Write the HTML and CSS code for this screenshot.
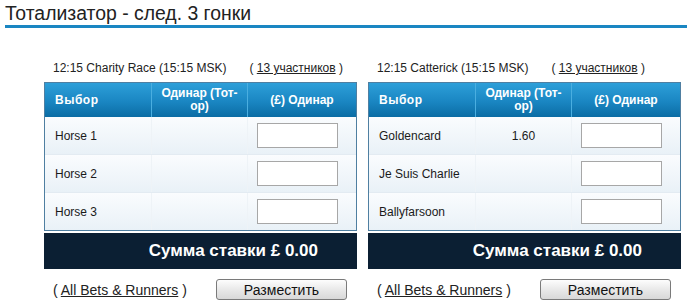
FILE: index.html
```html
<!DOCTYPE html>
<html>
<head>
<meta charset="utf-8">
<link rel="stylesheet" href="styles.css">
</head>
<body>
<div class="page">
  <h1 class="title">Тотализатор - след. 3 гонки</h1>
  <div class="races">
    <div class="race">
      <div class="race-head">12:15 Charity Race (15:15 MSK)<span class="runners">( <a href="#">13 участников</a> )</span></div>
      <div class="panel">
        <div class="row head">
          <div class="c1">Выбор</div>
          <div class="c2">Одинар (Тот-ор)</div>
          <div class="c3">(£) Одинар</div>
        </div>
        <div class="row">
          <div class="c1">Horse 1</div>
          <div class="c2"></div>
          <div class="c3"><input class="stake" type="text"></div>
        </div>
        <div class="row">
          <div class="c1">Horse 2</div>
          <div class="c2"></div>
          <div class="c3"><input class="stake" type="text"></div>
        </div>
        <div class="row last">
          <div class="c1">Horse 3</div>
          <div class="c2"></div>
          <div class="c3"><input class="stake" type="text"></div>
        </div>
      </div>
      <div class="total">Сумма ставки £ 0.00</div>
      <div class="actions">
        <span class="all">( <a href="#">All Bets &amp; Runners</a> )</span>
        <button class="place">Разместить</button>
      </div>
    </div>
    <div class="race">
      <div class="race-head">12:15 Catterick (15:15 MSK)<span class="runners">( <a href="#">13 участников</a> )</span></div>
      <div class="panel">
        <div class="row head">
          <div class="c1">Выбор</div>
          <div class="c2">Одинар (Тот-ор)</div>
          <div class="c3">(£) Одинар</div>
        </div>
        <div class="row">
          <div class="c1">Goldencard</div>
          <div class="c2">1.60</div>
          <div class="c3"><input class="stake" type="text"></div>
        </div>
        <div class="row">
          <div class="c1">Je Suis Charlie</div>
          <div class="c2"></div>
          <div class="c3"><input class="stake" type="text"></div>
        </div>
        <div class="row last">
          <div class="c1">Ballyfarsoon</div>
          <div class="c2"></div>
          <div class="c3"><input class="stake" type="text"></div>
        </div>
      </div>
      <div class="total">Сумма ставки £ 0.00</div>
      <div class="actions">
        <span class="all">( <a href="#">All Bets &amp; Runners</a> )</span>
        <button class="place">Разместить</button>
      </div>
    </div>
  </div>
</div>
</body>
</html>
```
FILE: styles.css
```css
* { box-sizing: border-box; }
body {
  margin: 0;
  background: #fff;
  font-family: "Liberation Sans", Arial, sans-serif;
  color: #1a1a1a;
}
.page {
  width: 687px;
  padding-left: 5px;
}
.title {
  margin: 0;
  padding-top: 1px;
  font-size: 19.4px;
  font-weight: normal;
  line-height: 24px;
  height: 28px;
  color: #222;
  border-bottom: 3px solid #1a86c2;
}
.races {
  display: flex;
  gap: 11px;
  padding-left: 39px;
}
.race {
  width: 313px;
}
.race-head {
  font-size: 12px;
  line-height: 14px;
  padding: 33px 0 0 9px;
  height: 54px;
  color: #222;
}
.runners {
  margin-left: 23px;
}
a {
  color: #222;
  text-decoration: underline;
}
.panel {
  border: 1px solid #4f7fa1;
}
.row {
  display: flex;
  height: 38px;
  align-items: center;
  font-size: 12px;
  background: linear-gradient(#fafcfe, #e9f1f7);
  border-bottom: 1px solid #e3ebf2;
}
.row.last { height: 37px; border-bottom: none; }
.row > div {
  height: 100%;
  display: flex;
  align-items: center;
}
.c1 { width: 106px; padding-left: 10px; }
.c2 { width: 96px; justify-content: center; text-align: center; border-left: 1px solid #eef3f7; }
.c3 { flex: 1; padding-left: 9px; border-left: 1px solid #eef3f7; }
.row.head {
  height: 34px;
  background: linear-gradient(#2d9fd9, #1a86c2 55%, #0b6ca4);
  color: #fff;
  font-weight: bold;
  font-size: 12px;
  line-height: 13px;
  border-bottom: none;
}
.row.head .c1 { letter-spacing: 0.5px; }
.row.head .c2, .row.head .c3 {
  border-left: 1px solid #4aaee0;
  justify-content: center;
  padding: 0 2px;
}
.stake {
  width: 81px;
  height: 25px;
  border: 1px solid #a7a7a7;
  background: #fff;
  margin: 0;
  padding: 0;
}
.total {
  margin-top: 2px;
  height: 36px;
  background: #0b1f33;
  color: #fff;
  font-weight: bold;
  font-size: 17px;
  line-height: 36px;
  text-align: right;
  padding-right: 39px;
}
.actions {
  display: flex;
  align-items: center;
  justify-content: space-between;
  padding: 10px 10px 0 9px;
  font-size: 14px;
}
.place {
  width: 131px;
  height: 21px;
  border: 1px solid #7a7a7a;
  border-radius: 3px;
  background: linear-gradient(#fdfdfd, #e9e9e9 50%, #d8d8d8);
  font-family: "Liberation Sans", Arial, sans-serif;
  font-size: 14px;
  color: #111;
  padding: 0;
}
```
